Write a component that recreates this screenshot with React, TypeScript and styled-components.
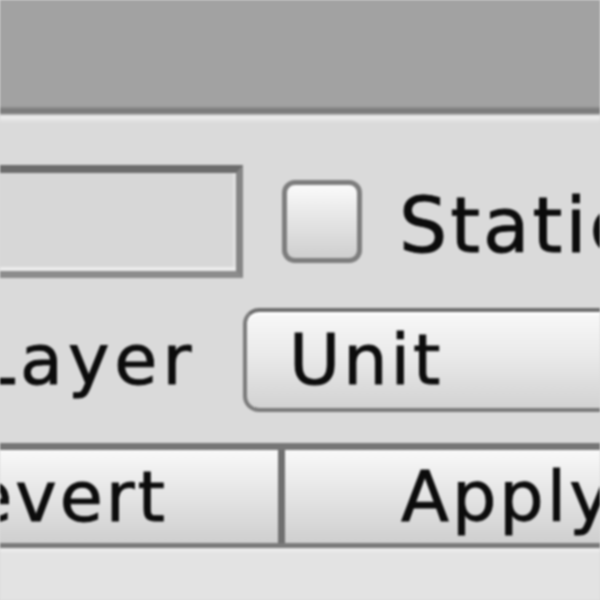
import React from "react";
import styled, { createGlobalStyle } from "styled-components";

const Global = createGlobalStyle`
  html, body { margin: 0; padding: 0; background: #dadada; }
  * { box-sizing: border-box; }
`;

const Screen = styled.div`
  width: 600px;
  height: 600px;
  overflow: hidden;
  display: flex;
  flex-direction: column;
  background: #dadada;
  font-family: "DejaVu Sans", "Liberation Sans", sans-serif;
  color: #0c0c0c;
  filter: blur(0.8px);
`;

const Header = styled.div`
  flex: 0 0 106px;
  background: #a2a2a2;
`;

const Separator = styled.div`
  flex: 0 0 17px;
  background: linear-gradient(
    #a2a2a2 0px,
    #7e7e7e 3px,
    #7a7a7a 7px,
    #efefef 10px,
    #e7e7e7 13px,
    #dadada 17px
  );
`;

const Panel = styled.div`
  width: 780px;
  margin-left: -70px;
  padding-top: 42px;
  display: flex;
  flex-direction: column;
  gap: 30px;
  background: #dadada;
`;

const Row = styled.div`
  display: flex;
  align-items: center;
`;

const Text = styled.span<{ $size?: number; $spacing?: number }>`
  font-size: ${(p) => p.$size ?? 70}px;
  letter-spacing: ${(p) => p.$spacing ?? 3}px;
  line-height: normal;
  white-space: nowrap;
  -webkit-text-stroke: 0.9px #0c0c0c;
`;

const TextField = styled.div`
  flex: 0 0 313px;
  height: 113px;
  background: #d7d7d7;
  border-top: 8px solid #6c6c6c;
  border-right: 7px solid #858585;
  border-bottom: 7px solid #8c8c8c;
  box-shadow: inset 0 -4px 0 #ececec, inset -3px 0 0 #e2e2e2;
`;

const Checkbox = styled.div`
  flex: 0 0 80px;
  height: 83px;
  margin-left: 39px;
  border: 5px solid #7d7d7d;
  border-radius: 13px;
  background: linear-gradient(#fbfbfb, #e8e8e8 40%, #cfcfcf);
`;

const StaticLabel = styled(Text)`
  margin-left: 37px;
  padding-top: 8px;
`;

const FieldLabel = styled.div`
  flex: 0 0 313px;
  padding-left: 46px;
`;

const Dropdown = styled.div`
  flex: 1;
  height: 104px;
  display: flex;
  align-items: center;
  padding-left: 42px;
  border: 4px solid #7a7a7a;
  border-top-color: #6e6e6e;
  border-radius: 16px 0 0 16px;
  background: linear-gradient(#f8f8f8, #eaeaea 45%, #d2d2d2);
  box-shadow: inset 0 3px 0 #ffffff;
`;

const ButtonBar = styled.div`
  display: flex;
  height: 105px;
  margin-top: 1px;
  border-top: 7px solid #767676;
  border-bottom: 5px solid #7a7a7a;
  background: linear-gradient(#f9f9f9, #e6e6e6 45%, #cfcfcf);
`;

const BarButton = styled.div<{ $width?: number; $align: "left" | "right"; $pad: number }>`
  flex: ${(p) => (p.$width ? `0 0 ${p.$width}px` : "1 1 0")};
  min-width: 0;
  display: flex;
  align-items: center;
  justify-content: ${(p) => (p.$align === "right" ? "flex-end" : "flex-start")};
  ${(p) => (p.$align === "right" ? `padding-right: ${p.$pad}px;` : `padding-left: ${p.$pad}px;`)}
`;

const BarDivider = styled.div`
  flex: 0 0 7px;
  background: #6f6f6f;
`;

const Footer = styled.div`
  flex: 1;
  background: #e3e3e3;
  border-top: 4px solid #ebebeb;
`;

export default function App() {
  return (
    <>
      <Global />
      <Screen>
        <Header />
        <Separator />
        <Panel>
          <Row>
            <TextField />
            <Checkbox />
            <StaticLabel $size={76}>Static</StaticLabel>
          </Row>
          <Row>
            <FieldLabel>
              <Text $spacing={5}>Layer</Text>
            </FieldLabel>
            <Dropdown>
              <Text>Unit</Text>
            </Dropdown>
          </Row>
          <ButtonBar>
            <BarButton $width={348} $align="right" $pad={110}>
              <Text>Revert</Text>
            </BarButton>
            <BarDivider />
            <BarButton $align="left" $pad={116}>
              <Text>Apply</Text>
            </BarButton>
          </ButtonBar>
        </Panel>
        <Footer />
      </Screen>
    </>
  );
}
